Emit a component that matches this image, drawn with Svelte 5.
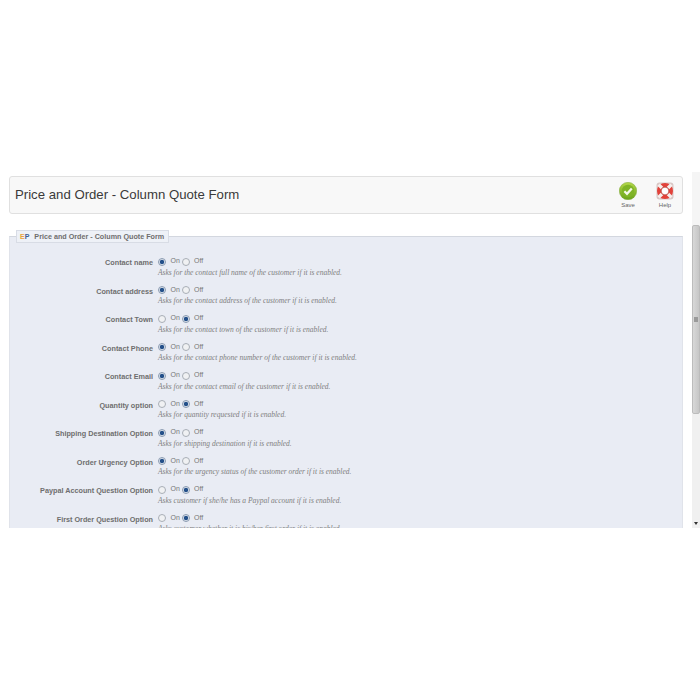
<script>
  const options = [
    { label: 'Contact name', on: true, help: 'Asks for the contact full name of the customer if it is enabled.' },
    { label: 'Contact address', on: true, help: 'Asks for the contact address of the customer if it is enabled.' },
    { label: 'Contact Town', on: false, help: 'Asks for the contact town of the customer if it is enabled.' },
    { label: 'Contact Phone', on: true, help: 'Asks for the contact phone number of the customer if it is enabled.' },
    { label: 'Contact Email', on: true, help: 'Asks for the contact email of the customer if it is enabled.' },
    { label: 'Quantity option', on: false, help: 'Asks for quantity requested if it is enabled.' },
    { label: 'Shipping Destination Option', on: true, help: 'Asks for shipping destination if it is enabled.' },
    { label: 'Order Urgency Option', on: true, help: 'Asks for the urgency status of the customer order if it is enabled.' },
    { label: 'Paypal Account Question Option', on: false, help: 'Asks customer if she/he has a Paypal account if it is enabled.' },
    { label: 'First Order Question Option', on: false, help: 'Asks customer whether it is his/her first order if it is enabled.' }
  ];
</script>

<div class="page">
  <div class="frame">
    <div class="content">
      <div class="toolbar">
        <h1>Price and Order - Column Quote Form</h1>
        <div class="actions">
          <div class="action">
            <svg width="18" height="18" viewBox="0 0 18 18">
              <defs>
                <linearGradient id="saveFill" x1="0" y1="0" x2="0" y2="1">
                  <stop offset="0" stop-color="#b4d84a" />
                  <stop offset="1" stop-color="#6aa31a" />
                </linearGradient>
              </defs>
              <circle cx="9" cy="9" r="8.7" fill="url(#saveFill)" stroke="#7fa83a" stroke-width="0.5" />
              <circle cx="9" cy="9" r="6.2" fill="#7fb427" />
              <path d="M5.4 9.2 L8 11.8 L12.8 6.4" fill="none" stroke="#f6f9ea" stroke-width="2.2" />
            </svg>
            <span>Save</span>
          </div>
          <div class="action">
            <svg width="18" height="18" viewBox="0 0 18 18">
              <rect x="0.5" y="0.5" width="17" height="17" rx="3" fill="#d8c6c4" />
              <circle cx="9" cy="9" r="8" fill="#e2423a" />
              <path d="M2.6 2.6 L6 6 M15.4 2.6 L12 6 M2.6 15.4 L6 12 M15.4 15.4 L12 12" stroke="#f6eeec" stroke-width="3.4" />
              <circle cx="9" cy="9" r="3.9" fill="#fff" stroke="#b5453c" stroke-width="0.8" />
            </svg>
            <span>Help</span>
          </div>
        </div>
      </div>

      <fieldset>
        <legend><b class="logo"><i>E</i><u>P</u></b>Price and Order - Column Quote Form</legend>
        {#each options as opt}
          <div class="row">
            <div class="name">{opt.label}</div>
            <div class="field">
              <div class="radios">
                <span class="radio" class:checked={opt.on}></span>
                <span class="val">On</span>
                <span class="radio second" class:checked={!opt.on}></span>
                <span class="val">Off</span>
              </div>
              <p>{opt.help}</p>
            </div>
          </div>
        {/each}
      </fieldset>
    </div>
    <div class="scrollbar">
      <div class="gap"></div>
      <div class="thumb"><span class="grip"></span></div>
      <div class="track"><span class="arrow"></span></div>
    </div>
  </div>
</div>

<style>
  :global(body) {
    background: #fff;
    font-family: "Liberation Sans", Arial, sans-serif;
  }

  .page {
    width: 700px;
    height: 700px;
    padding-top: 172px;
    box-sizing: border-box;
    overflow: hidden;
  }

  .frame {
    display: flex;
    height: 356px;
    overflow: hidden;
  }

  .content {
    width: 692px;
    padding: 4px 9px 0;
    box-sizing: border-box;
  }

  .toolbar {
    display: flex;
    align-items: center;
    justify-content: space-between;
    width: 674px;
    height: 38px;
    box-sizing: border-box;
    padding: 0 9px 0 5px;
    background: #f8f8f8;
    border: 1px solid #e0e0e0;
    border-radius: 3px;
  }

  h1 {
    margin: 0 0 2px;
    font-size: 13.2px;
    font-weight: normal;
    color: #3a3a3a;
  }

  .actions {
    display: flex;
    gap: 19px;
    transform: translateX(1px);
  }

  .action {
    display: flex;
    flex-direction: column;
    align-items: center;
    width: 18px;
    font-size: 6px;
    color: #666;
  }

  .action span {
    margin-top: 2px;
  }

  fieldset {
    width: 674px;
    margin: 16px 0 0;
    padding: 5px 0 0;
    box-sizing: border-box;
    background: #e9ecf4;
    border: 0;
    border-top: 1px solid #d3d7df;
    border-left: 1px solid #e0e3ea;
    border-right: 1px solid #e0e3ea;
    min-width: 0;
  }

  legend {
    margin-left: 6px;
    padding: 0 0 0 3px;
    height: 13px;
    line-height: 12px;
    box-sizing: border-box;
    width: 153px;
    white-space: nowrap;
    font-size: 7.2px;
    font-weight: bold;
    color: #6e6e6e;
    background: #eef1f7;
    border: 1px solid #d8dce5;
  }

  .logo {
    margin-right: 5px;
    font-size: 7px;
  }

  .logo i {
    font-style: normal;
    color: #e8a33c;
  }

  .logo u {
    text-decoration: none;
    color: #3b5f94;
  }

  .row {
    display: flex;
    height: 28.55px;
  }

  .name {
    width: 143px;
    padding-top: 10px;
    text-align: right;
    font-size: 7.25px;
    font-weight: bold;
    color: #6e6e6e;
    white-space: nowrap;
  }

  .field {
    margin-left: 5px;
    padding-top: 7px;
  }

  .radios {
    display: flex;
    align-items: center;
    height: 11px;
  }

  .radio {
    width: 6px;
    height: 6px;
    margin-top: 2px;
    border: 0.5px solid #a8aeb6;
    border-radius: 50%;
    background: #f0f1f3;
    box-sizing: content-box;
  }

  .radio.checked {
    background: radial-gradient(circle, #24508a 0 1.8px, #dfe6ef 2.6px);
    border-color: #8a9ab0;
  }

  .radio.second {
    margin-left: 3px;
  }

  .val {
    margin-left: 4.5px;
    font-size: 7px;
    color: #777;
    width: 8px;
  }

  p {
    margin: 1.5px 0 0;
    font-family: "Liberation Serif", "Times New Roman", serif;
    font-style: italic;
    font-size: 7.5px;
    line-height: 9px;
    color: #808080;
    white-space: nowrap;
  }

  .scrollbar {
    display: flex;
    flex-direction: column;
    flex: 1;
    background: #f1f1f1;
  }

  .gap {
    height: 53px;
    background: #f5f5f5;
  }

  .thumb {
    display: flex;
    align-items: center;
    justify-content: center;
    height: 189px;
    box-sizing: border-box;
    border: 1px solid #bcbcbc;
    border-radius: 2px;
    background: linear-gradient(90deg, #d8d8d8, #c6c6c6);
  }

  .grip {
    width: 4px;
    height: 5px;
    background: #9a9a9a;
  }

  .track {
    flex: 1;
    display: flex;
    align-items: flex-end;
    justify-content: center;
    padding-bottom: 3px;
    background: #f0f0f0;
  }

  .arrow {
    width: 0;
    height: 0;
    border-left: 2px solid transparent;
    border-right: 2px solid transparent;
    border-top: 3px solid #333;
  }
</style>
